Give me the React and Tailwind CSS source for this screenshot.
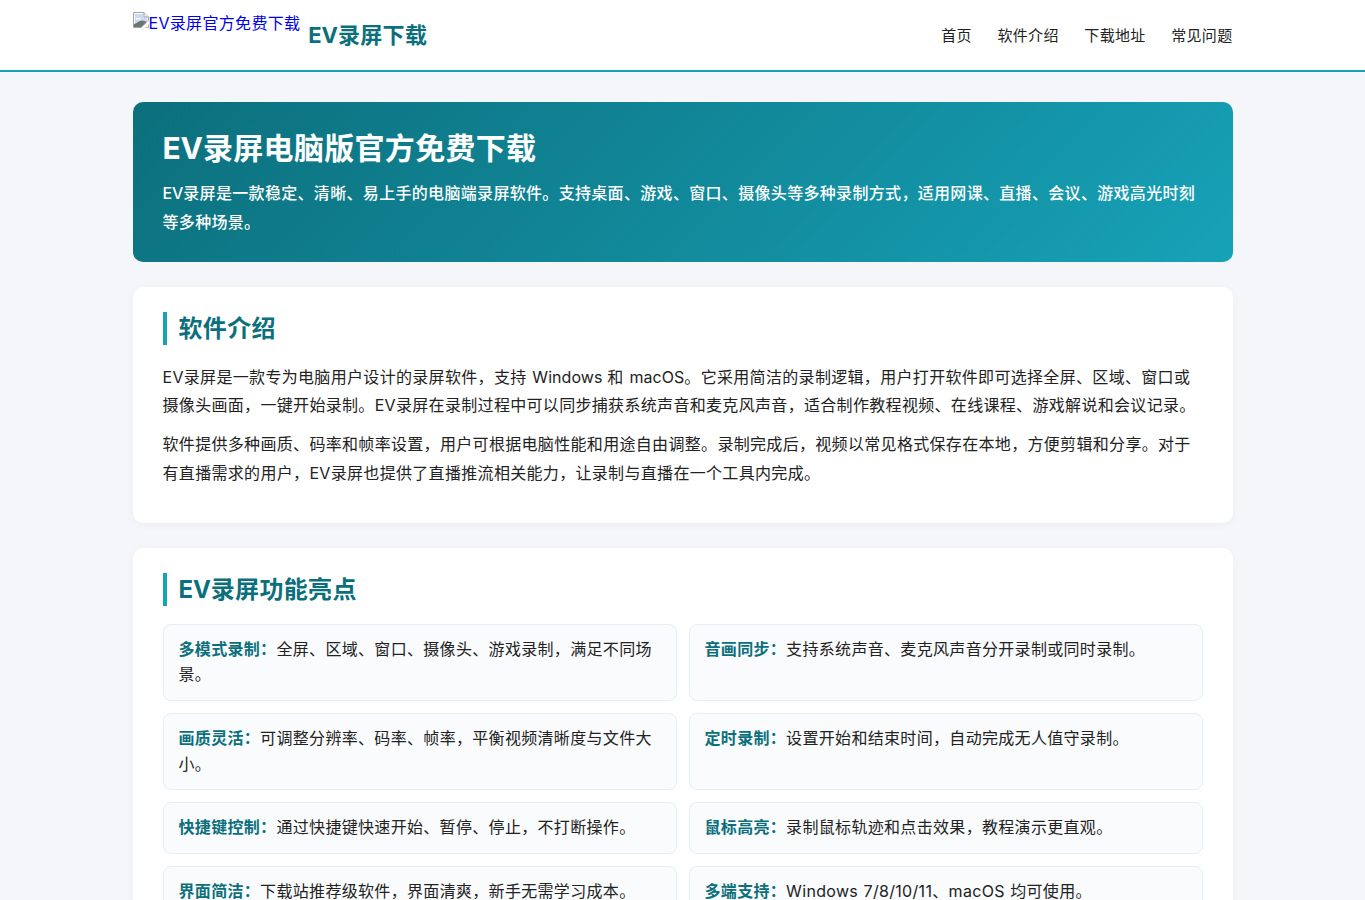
const navItems = ['首页', '软件介绍', '下载地址', '常见问题'];

const features = [
  { title: '多模式录制：', text: '全屏、区域、窗口、摄像头、游戏录制，满足不同场景。' },
  { title: '音画同步：', text: '支持系统声音、麦克风声音分开录制或同时录制。' },
  { title: '画质灵活：', text: '可调整分辨率、码率、帧率，平衡视频清晰度与文件大小。' },
  { title: '定时录制：', text: '设置开始和结束时间，自动完成无人值守录制。' },
  { title: '快捷键控制：', text: '通过快捷键快速开始、暂停、停止，不打断操作。' },
  { title: '鼠标高亮：', text: '录制鼠标轨迹和点击效果，教程演示更直观。' },
  { title: '界面简洁：', text: '下载站推荐级软件，界面清爽，新手无需学习成本。' },
  { title: '多端支持：', text: 'Windows 7/8/10/11、macOS 均可使用。' },
];

const ImagePlaceholder = () => (
  <svg width="16" height="16" viewBox="0 0 16 16" className="shrink-0">
    <path d="M0.5 0.5H11L15.5 5V15.5H0.5Z" fill="#fff" stroke="#a3a3a3" />
    <path d="M2 2H10.5V5.5H14V14H2Z" fill="#c9d9f5" />
    <path d="M3 7c0-1.500 1.500-2 2.200-1C6.500 5.200 8 6 7.800 7.500H3Z" fill="#fff" />
    <path d="M1 15v-3c3-.5 5-3.500 8-3.500 2 0 3 .8 5 1.500L9 15Z" fill="#6d756f" />
    <path d="M16 8v8H8Z" fill="#fff" />
    <path d="M15.500 8 8 15.500M15.500 12.500V15.500H12.500" fill="none" stroke="#a3a3a3" strokeWidth="0.8" />
    <path d="M11 0.500V5h4.500" fill="#eee" stroke="#a3a3a3" />
  </svg>
);

const Header = () => (
  <header className="h-[72px] border-b-2 border-[#17a2b8] bg-white">
    <div className="mx-auto flex h-full w-[1100px] items-center justify-between">
      <a href="#home" className="flex items-center">
        <span className="flex h-[46px] items-start text-[#0000ee]">
          <ImagePlaceholder />
          <span className="leading-[22px]">EV录屏官方免费下载</span>
        </span>
        <span className="ml-2 text-[22px] leading-[31px] font-bold text-[#0c6f7c]">
          <span className="tracking-[-0.1px]">EV</span>录屏下载
        </span>
      </a>
      <nav className="flex gap-[25.6px] pt-0.5 text-[15px] text-[#222]">
        {navItems.map((item) => (
          <a key={item} href="#section">{item}</a>
        ))}
      </nav>
    </div>
  </header>
);

const Card = ({ title, children }) => (
  <section className="mt-[25px] rounded-[10px] bg-white px-[30px] py-[25px] shadow-[0_2px_10px_rgba(0,0,0,0.04)]">
    <h2 className="mb-[18px] border-l-4 border-[#17a2b8] pl-3 text-2xl leading-[33px] font-bold text-[#0c6f7c]">
      {title}
    </h2>
    {children}
  </section>
);

export default function App() {
  return (
    <div
      lang="zh-CN"
      className="h-screen overflow-hidden bg-[#f4f6f9] font-[Inter,'Noto_Sans_CJK_SC',sans-serif] text-base tracking-[0.32px] text-[#222]"
    >
      <Header />
      <main className="mx-auto mt-[30px] w-[1100px]">
        <section className="rounded-[10px] bg-linear-135 from-[#0c6f7c] to-[#17a2b8] px-[30px] py-[25px] text-white">
          <h1 className="mb-2.5 text-[30px] leading-[42px] font-bold">
            <span className="tracking-[-0.1px]">EV</span>录屏电脑版官方免费下载
          </h1>
          <p className="leading-[28.8px] font-medium">
            <span className="tracking-[-0.1px]">EV</span>录屏是一款稳定、清晰、易上手的电脑端录屏软件。支持桌面、游戏、窗口、摄像头等多种录制方式，适用网课、直播、会议、游戏高光时刻等多种场景。
          </p>
        </section>

        <Card title="软件介绍">
          <p className="mb-2.5 leading-[28.8px]">
            EV录屏是一款专为电脑用户设计的录屏软件，支持{' '}
            <span className="ml-px tracking-[0.05px]">Windows</span>
            {' '}和{' '}
            <span className="ml-px tracking-[0.05px]">macOS</span>
            。它采用简洁的录制逻辑，用户打开软件即可选择全屏、区域、窗口或摄像头画面，一键开始录制。EV录屏在录制过程中可以同步捕获系统声音和麦克风声音，适合制作教程视频、在线课程、游戏解说和会议记录。
          </p>
          <p className="mb-2.5 leading-[28.8px]">
            软件提供多种画质、码率和帧率设置，用户可根据电脑性能和用途自由调整。录制完成后，视频以常见格式保存在本地，方便剪辑和分享。对于有直播需求的用户，EV录屏也提供了直播推流相关能力，让录制与直播在一个工具内完成。
          </p>
        </Card>

        <Card title={<><span className="tracking-[-0.1px]">EV</span>录屏功能亮点</>}>
          <ul className="grid grid-cols-2 gap-3">
            {features.map(({ title, text }) => (
              <li
                key={title}
                className="rounded-lg border border-[#e3f0f4] bg-[#f9fbfd] px-[15px] py-3 leading-[25.6px] [word-spacing:0.6px]"
              >
                <strong className="font-bold text-[#0c6f7c]">{title}</strong>
                {text}
              </li>
            ))}
          </ul>
        </Card>
      </main>
    </div>
  );
}
